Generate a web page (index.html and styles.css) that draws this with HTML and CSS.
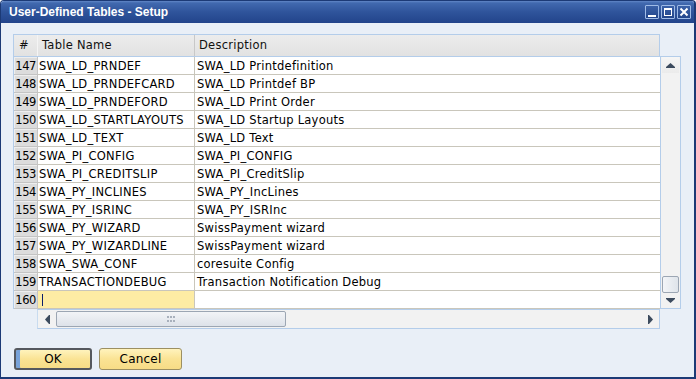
FILE: index.html
```html
<!DOCTYPE html>
<html>
<head>
<meta charset="utf-8">
<link rel="stylesheet" href="styles.css">
</head>
<body>
<div class="window">
  <div class="titlebar">
    <span class="title">User-Defined Tables - Setup</span>
    <div class="tbtn"><svg width="12" height="12" viewBox="0 0 12 12"><rect x="2" y="9" width="8" height="2" fill="#fff"/></svg></div>
    <div class="tbtn"><svg width="12" height="12" viewBox="0 0 12 12"><rect x="2.5" y="2.5" width="7" height="7" fill="none" stroke="#fff"/><rect x="2" y="2" width="8" height="2" fill="#fff"/></svg></div>
    <div class="tbtn"><svg width="12" height="12" viewBox="0 0 12 12"><path d="M2.5 2.5 L9.5 9.5 M9.5 2.5 L2.5 9.5" stroke="#fff" stroke-width="2"/></svg></div>
  </div>
  <div class="body">
    <div class="grid">
      <div class="head">
        <div class="hc hnum">#</div>
        <div class="hc hname">Table Name</div>
        <div class="hc hdesc">Description</div>
      </div>
      <div class="rows">
        <div class="row"><div class="num">147</div><div class="name">SWA_LD_PRNDEF</div><div class="desc">SWA_LD Printdefinition</div></div>
        <div class="row"><div class="num">148</div><div class="name">SWA_LD_PRNDEFCARD</div><div class="desc">SWA_LD Printdef BP</div></div>
        <div class="row"><div class="num">149</div><div class="name">SWA_LD_PRNDEFORD</div><div class="desc">SWA_LD Print Order</div></div>
        <div class="row"><div class="num">150</div><div class="name">SWA_LD_STARTLAYOUTS</div><div class="desc">SWA_LD Startup Layouts</div></div>
        <div class="row"><div class="num">151</div><div class="name">SWA_LD_TEXT</div><div class="desc">SWA_LD Text</div></div>
        <div class="row"><div class="num">152</div><div class="name">SWA_PI_CONFIG</div><div class="desc">SWA_PI_CONFIG</div></div>
        <div class="row"><div class="num">153</div><div class="name">SWA_PI_CREDITSLIP</div><div class="desc">SWA_PI_CreditSlip</div></div>
        <div class="row"><div class="num">154</div><div class="name">SWA_PY_INCLINES</div><div class="desc">SWA_PY_IncLines</div></div>
        <div class="row"><div class="num">155</div><div class="name">SWA_PY_ISRINC</div><div class="desc">SWA_PY_ISRInc</div></div>
        <div class="row"><div class="num">156</div><div class="name">SWA_PY_WIZARD</div><div class="desc">SwissPayment wizard</div></div>
        <div class="row"><div class="num">157</div><div class="name">SWA_PY_WIZARDLINE</div><div class="desc">SwissPayment wizard</div></div>
        <div class="row"><div class="num">158</div><div class="name">SWA_SWA_CONF</div><div class="desc">coresuite Config</div></div>
        <div class="row"><div class="num">159</div><div class="name">TRANSACTIONDEBUG</div><div class="desc">Transaction Notification Debug</div></div>
        <div class="row"><div class="num">160</div><div class="name active"><span class="caret"></span></div><div class="desc"></div></div>
      </div>
      <div class="vscroll">
        <div class="sbtn vup"><svg width="9" height="5" viewBox="0 0 9 5"><path d="M4.5 0 L9 4 L0 4 Z" fill="#3c4b5e"/><rect x="0" y="4" width="9" height="1" fill="#3c4b5e"/></svg></div>
        <div class="vtrack"></div>
        <div class="vthumb"></div>
        <div class="sbtn vdown"><svg width="9" height="5" viewBox="0 0 9 5"><rect x="0" y="0" width="9" height="1" fill="#3c4b5e"/><path d="M0 1 L9 1 L4.5 5 Z" fill="#3c4b5e"/></svg></div>
      </div>
      <div class="hscroll">
        <div class="sbtn hleft"><svg width="5" height="9" viewBox="0 0 5 9"><path d="M0 4.5 L4 0 L4 9 Z" fill="#3c4b5e"/><rect x="4" y="0" width="1" height="9" fill="#3c4b5e"/></svg></div>
        <div class="hthumb"><svg width="9" height="7" viewBox="0 0 9 7"><g fill="#a8b0bc"><rect x="0" y="0" width="2" height="2"/><rect x="3" y="0" width="2" height="2"/><rect x="6" y="0" width="2" height="2"/><rect x="0" y="4" width="2" height="2"/><rect x="3" y="4" width="2" height="2"/><rect x="6" y="4" width="2" height="2"/></g></svg></div>
        <div class="htrack"></div>
        <div class="sbtn hright"><svg width="5" height="9" viewBox="0 0 5 9"><rect x="0" y="0" width="1" height="9" fill="#3c4b5e"/><path d="M1 0 L5 4.5 L1 9 Z" fill="#3c4b5e"/></svg></div>
      </div>
    </div>
    <div class="buttons">
      <div class="btn ok">OK</div>
      <div class="btn cancel">Cancel</div>
    </div>
  </div>
</div>
</body>
</html>
```

FILE: styles.css
```css
* { box-sizing: border-box; }
body {
  margin: 0;
  font-family: "DejaVu Sans", sans-serif;
  font-size: 11.5px;
  color: #000;
  background: #fff;
}
.window {
  width: 696px;
  height: 379px;
  background: #e9eff7;
  border: 1px solid #1c3a76;
  border-right-width: 2px;
  border-bottom-width: 2px;
  border-radius: 4px 4px 0 0;
  overflow: hidden;
  display: flex;
  flex-direction: column;
}
.titlebar {
  height: 22px;
  flex: none;
  background: linear-gradient(#6187c7 0, #4169af 2px, #2f549b 50%, #22448b 100%);
  display: flex;
  align-items: center;
  padding: 0 3px 0 8px;
  gap: 2px;
}
.title {
  flex: 1;
  color: #fff;
  font-family: "Liberation Sans", Arial, sans-serif;
  font-weight: bold;
  font-size: 12px;
}
.tbtn {
  width: 14px;
  height: 14px;
  border: 1px solid #9fbbe6;
  border-radius: 1px;
  background: linear-gradient(#3a61a8, #23468c);
  display: flex;
  align-items: center;
  justify-content: center;
}
.tbtn svg { display: block; }
.body {
  flex: 1;
  padding: 11px 0 0 12px;
  display: flex;
  flex-direction: column;
}
.grid {
  display: grid;
  grid-template-columns: 647px 21px;
  grid-template-rows: 23px 252px 20px;
}
.head {
  grid-column: 1;
  grid-row: 1;
  display: flex;
  border: 1px solid #b4cdea;
  background: linear-gradient(#ececec, #e2e2e2);
  letter-spacing: 0.25px;
}
.hc {
  line-height: 20px;
  color: #111;
}
.hnum { width: 24px; padding-left: 5px; border-right: 1px solid #f4f4f4; }
.hname { width: 157px; padding-left: 4px; border-right: 1px solid #c8c8c8; }
.hdesc { flex: 1; padding-left: 4px; }
.rows {
  grid-column: 1;
  grid-row: 2;
  border-left: 1px solid #b4cdea;
  background: #fff;
  letter-spacing: 0.25px;
}
.row {
  display: flex;
  height: 18px;
}
.row > div {
  line-height: 17px;
  padding-top: 1px;
  white-space: nowrap;
  overflow: hidden;
}
.num {
  width: 24px;
  background: #dcdcdc;
  border-right: 1px solid #c4c4c4;
  border-bottom: 1px solid #c4c4c4;
  box-shadow: inset 1px 1px 0 #eeeeee;
  text-align: right;
  padding-right: 1px;
  letter-spacing: -0.4px;
}
.name {
  width: 157px;
  padding-left: 1px;
  border-right: 1px solid #c9c6bb;
  border-bottom: 1px solid #c9c6bb;
}
.desc {
  flex: 1;
  padding-left: 2px;
  border-bottom: 1px solid #c9c6bb;
}
.row > .name.active {
  background: #fdeca4;
  padding: 0 0 0 4px;
  display: flex;
  align-items: center;
}
.caret {
  width: 1px;
  height: 12px;
  background: #0c1f6a;
}
.vscroll {
  grid-column: 2;
  grid-row: 2;
  margin-top: -1px;
  border: 1px solid #b4cdea;
  background: #f2f2f2;
  display: flex;
  flex-direction: column;
  padding: 0 1px;
}
.sbtn {
  display: flex;
  align-items: center;
  justify-content: center;
  flex: none;
}
.sbtn svg { display: block; }
.vup { height: 16px; background: linear-gradient(#f6f6f6, #ebebeb); }
.vtrack { flex: 1; }
.vthumb {
  height: 17px;
  border: 1px solid #9ca6b3;
  border-radius: 2px;
  background: linear-gradient(90deg, #f3f5f8, #dfe4ea);
}
.vdown { height: 15px; }
.hscroll {
  grid-column: 1;
  grid-row: 3;
  margin-left: 24px;
  border: 1px solid #b4cdea;
  border-left-color: #c8dbef;
  background: #f2f2f2;
  display: flex;
  padding: 1px 0;
}
.hleft { width: 18px; }
.hright { width: 18px; }
.hthumb {
  width: 230px;
  border: 1px solid #9ca6b3;
  border-radius: 2px;
  background: linear-gradient(#f2f4f7, #dde2e9);
  display: flex;
  align-items: center;
  justify-content: center;
}
.htrack { flex: 1; }
.buttons {
  display: flex;
  gap: 7px;
  margin-top: 19px;
  padding-left: 1px;
}
.btn {
  height: 22px;
  display: flex;
  align-items: center;
  justify-content: center;
  font-size: 12px;
  letter-spacing: 0.2px;
  border-radius: 3px;
  background: linear-gradient(#fff3bd, #fae394 50%, #f7dc86);
}
.ok {
  width: 78px;
  border: 2px solid #55585e;
  box-shadow: inset 4px 0 0 #78a2d8;
}
.cancel {
  width: 83px;
  border: 1px solid #9c8f62;
}
```
